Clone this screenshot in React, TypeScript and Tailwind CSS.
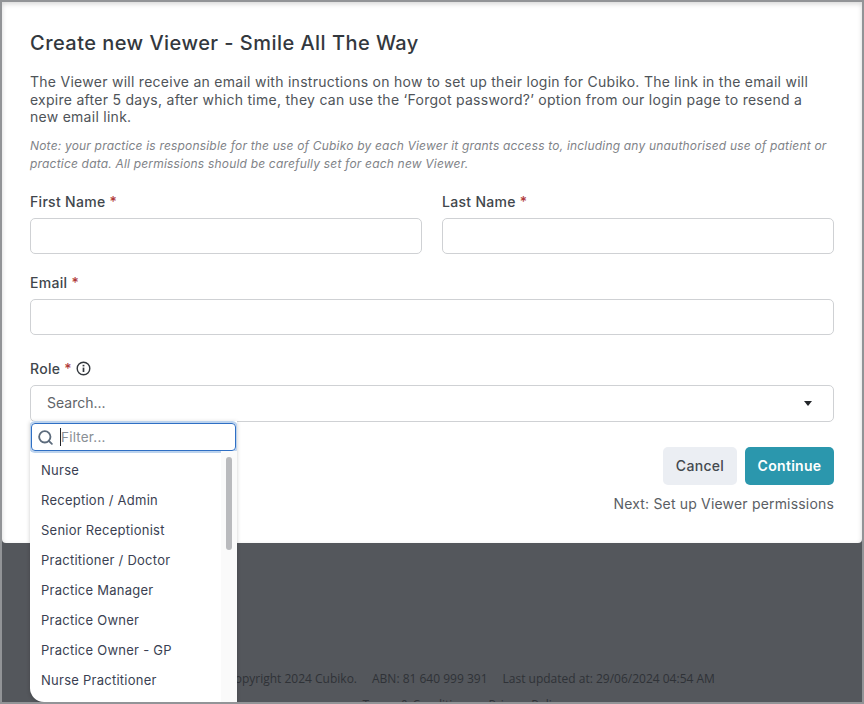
import React from "react";
import { Search } from "lucide-react";

const roles = ["Nurse", "Reception / Admin", "Senior Receptionist", "Practitioner / Doctor", "Practice Manager", "Practice Owner", "Practice Owner - GP", "Nurse Practitioner"];

function Field({ label, className = "" }: { label: string; className?: string }) {
  return (
    <div className={className}>
      <label className="block h-[18px] mb-[7px] text-[14px] leading-[18px] font-medium text-[#41464c] tracking-[0.3px]">
        {label} <span className="text-[#b03a3a]">*</span>
      </label>
      <div className="h-[36px] rounded-[5px] border border-[#cfd1d4] bg-white" />
    </div>
  );
}

export default function App() {
  return (
    <div className="relative flex h-[704px] w-[864px] flex-col overflow-hidden border-2 border-[#929497] bg-[#54575c] font-['Inter',sans-serif]">
      <div className="h-[541px] shrink-0 rounded-b-[4px] bg-white px-[28px] pt-[28px] shadow-[inset_0_2px_5px_rgba(0,0,0,0.16)]">
        <h1 className="text-[20px] leading-[26px] font-medium text-[#33383e] tracking-[0.46px]">Create new Viewer - Smile All The Way</h1>
        <p className="mt-[17px] text-[14px] leading-[17.5px] text-[#4f5459] tracking-[0.27px]">
          The Viewer will receive an email with instructions on how to set up their login for Cubiko. The link in the email will expire after 5 days, after which time, they can use the ‘Forgot password?’ option from our login page to resend a new email link.
        </p>
        <p className="mt-[11px] text-[12px] leading-[18.5px] italic text-[#7f8388] tracking-[0.19px]">
          Note: your practice is responsible for the use of Cubiko by each Viewer it grants access to, including any unauthorised use of patient or practice data. All permissions should be carefully set for each new Viewer.
        </p>
        <div className="mt-[19px] flex gap-[20px]">
          <Field label="First Name" className="flex-1" />
          <Field label="Last Name" className="flex-1" />
        </div>
        <Field label="Email" className="mt-[20px]" />
        <div className="mt-[25px]">
          <div className="mb-[7px] flex h-[18px] items-center gap-[4px] text-[14px] font-medium text-[#41464c] tracking-[0.3px]">
            <span>Role <span className="text-[#b03a3a]">*</span></span>
            <svg width="15" height="15" viewBox="0 0 15 15" fill="none" stroke="#33383e" strokeWidth="1.4">
              <circle cx="7.5" cy="7.5" r="6.3" />
              <path d="M7.5 6.6V11" strokeWidth="1.7" />
              <path d="M7.5 3.8V5.4" strokeWidth="1.8" />
            </svg>
          </div>
          <div className="flex h-[37px] items-center justify-between rounded-[5px] border border-[#cfd1d4] bg-white pb-[2px] pl-[16px] pr-[21px]">
            <span className="text-[14px] text-[#5f6469]">Search...</span>
            <span className="mt-[2px] h-0 w-0 border-x-[4.5px] border-t-[5px] border-x-transparent border-t-[#23262a]" />
          </div>
        </div>
        <div className="mt-[25px] flex justify-end gap-[8px]">
          <button className="h-[38px] w-[74px] rounded-[5px] bg-[#ebeef3] text-[14px] font-medium text-[#44494f] tracking-[0.3px]">Cancel</button>
          <button className="h-[38px] w-[89px] rounded-[5px] bg-[#2b97ad] text-[14px] font-semibold text-white tracking-[0.3px]">Continue</button>
        </div>
        <p className="mt-[10px] text-right text-[14px] leading-[18px] text-[#5a5e64] tracking-[0.18px]">Next: Set up Viewer permissions</p>
      </div>

      <div className="mt-[128px] flex flex-col items-center pl-[78px] font-['Open_Sans',sans-serif] text-[12px] leading-[16px] text-[#2f3237]">
        <div className="flex gap-[15px]">
          <span>Copyright 2024 Cubiko.</span>
          <span>ABN: 81 640 999 391</span>
          <span>Last updated at: 29/06/2024 04:54 AM</span>
        </div>
        <div className="mr-[16px] mt-[10px] flex gap-[16px]">
          <span>Terms &amp; Conditions</span>
          <span>Privacy Policy</span>
        </div>
      </div>

      <div className="absolute left-[28px] top-[419px] h-[281px] w-[207px] overflow-hidden rounded-bl-[14px] bg-white shadow-[0_1px_4px_rgba(0,0,0,0.2)]">
        <div className="mx-[1px] mt-[2px] flex h-[28px] w-[205px] items-center rounded-[4px] border border-[#2f6fc4] shadow-[0_0_0_2px_#bcd3ee]">
          <Search size={17} strokeWidth={2.6} className="ml-[5px] text-[#5c6b7c]" />
          <span className="ml-[6px] h-[18px] w-px bg-[#20242a]" />
          <span className="text-[13.5px] text-[#8a8f95] tracking-[0.2px]">Filter...</span>
        </div>
        <div className="flex">
          <ul className="mt-[5px] flex-1 pl-[11px]">
            {roles.map((r) => (
              <li key={r} className="flex h-[30px] items-center text-[13px] text-[#3a3f52] tracking-[0.25px]">{r}</li>
            ))}
          </ul>
          <div className="h-[252px] w-[16px] bg-[#fafafa] pl-[5px] pt-[6px]">
            <div className="h-[93px] w-[6px] rounded-full bg-[#b9babd]" />
          </div>
        </div>
      </div>
    </div>
  );
}
